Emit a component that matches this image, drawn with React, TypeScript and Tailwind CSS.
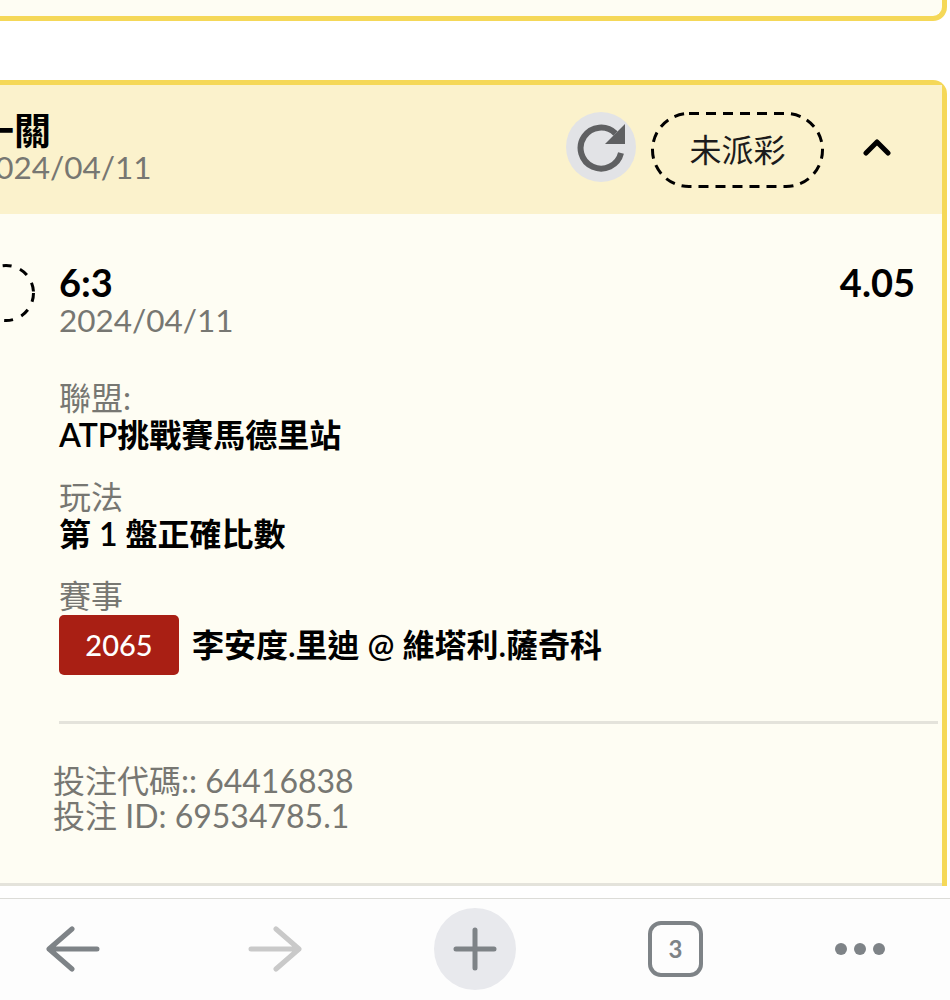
import React from 'react';

const FONT = "font-['Lato','Noto_Sans_CJK_TC',sans-serif]";

const Field: React.FC<{ label: string; value: string; className?: string }> = ({ label, value, className }) => (
  <div className={className}>
    <div className="text-[32px] leading-[37px] text-[#777772]">{label}</div>
    <div className="text-[32px] leading-[37px] font-semibold text-black">{value}</div>
  </div>
);

const RefreshIcon = () => (
  <svg width="50" height="50" viewBox="0 0 50 50" fill="none">
    <path d="M39.5 11.5A20.5 20.5 0 1 0 45 31" stroke="#5f6062" strokeWidth="6" />
    <path d="M49 2v20H29z" fill="#5f6062" />
  </svg>
);

const NavBar = () => (
  <nav className="h-[102px] shrink-0 border-t border-[#dcdcd8] bg-[#fdfdfd] flex items-center pl-[46px] pb-[1px]">
    <svg width="54" height="46" viewBox="0 0 54 46" fill="none" stroke="#7e8387" strokeWidth="5" strokeLinecap="round" strokeLinejoin="round">
      <path d="M51 23H3M26 3 3 23l23 20" />
    </svg>
    <svg width="54" height="46" viewBox="0 0 54 46" fill="none" stroke="#c9c9c9" strokeWidth="5" strokeLinecap="round" strokeLinejoin="round" className="ml-[148px]">
      <path d="M3 23h48M28 3l23 20-23 20" />
    </svg>
    <button className="w-[82px] h-[82px] rounded-full bg-[#e8e9ed] flex items-center justify-center ml-[132px]">
      <svg width="44" height="44" viewBox="0 0 44 44" fill="none" stroke="#7e8387" strokeWidth="5" strokeLinecap="round">
        <path d="M22 3v38M3 22h38" />
      </svg>
    </button>
    <div className={`w-[55px] h-[56px] rounded-[13px] border-[4px] border-[#7e8387] flex items-center justify-center text-[24px] font-bold text-[#7e8387] ml-[132px] ${FONT}`}>3</div>
    <div className="flex gap-[7px] ml-[132px]">
      <span className="w-[12px] h-[12px] rounded-full bg-[#7e8387]" />
      <span className="w-[12px] h-[12px] rounded-full bg-[#7e8387]" />
      <span className="w-[12px] h-[12px] rounded-full bg-[#7e8387]" />
    </div>
  </nav>
);

const App: React.FC = () => {
  return (
    <div className={`h-screen w-[950px] flex flex-col overflow-hidden bg-white ${FONT}`}>
      <div className="flex-1 min-h-0 overflow-hidden">
        {/* previous bet, only its lower edge is in view */}
        <div className="h-[21px] mr-[3px] ml-[-40px] border-[5px] border-t-0 border-[#f5d858] rounded-b-[14px] bg-[#fefdf3]" />

        <section className="mt-[59px] mr-[3px] ml-[-93px] border-[5px] border-b-0 border-[#f5d858] rounded-t-[14px] bg-[#fefdf3]">
          <header className="h-[129px] bg-[#fbf2cc] flex items-center pl-[65px] pr-[51px] pb-[6px]">
            <div className="flex-1">
              <div className="mt-[2px] text-[37px] leading-[42px] font-bold text-black">一關</div>
              <div className="mt-[-3px] text-[31.5px] leading-[36px] text-[#777772]">2024/04/11</div>
            </div>
            <button className="w-[70px] h-[70px] rounded-full bg-[#e2e3e6] flex items-center justify-center">
              <RefreshIcon />
            </button>
            <div className="relative ml-[15px] mt-[6px] w-[173px] h-[76px] flex items-center justify-center text-[32px] text-[#1c1c1c]">
              <svg width="173" height="76" viewBox="0 0 173 76" fill="none" className="absolute inset-0">
                <rect x="1.5" y="1.5" width="170" height="73" rx="36.5" stroke="black" strokeWidth="3" strokeDasharray="10 7" />
              </svg>
              未派彩
            </div>
            <svg width="28" height="18" viewBox="0 0 28 18" fill="none" stroke="black" strokeWidth="5" strokeLinecap="round" strokeLinejoin="round" className="ml-[39px]">
              <path d="M3 15 14 4l11 11" />
            </svg>
          </header>

          <div className="pl-[65px] pt-[48px]">
            <div className="flex pr-[27px]">
              <svg width="58" height="58" viewBox="0 0 58 58" fill="none" className="shrink-0 mt-[2px]">
                <circle cx="29" cy="29" r="27.5" stroke="black" strokeWidth="3" strokeDasharray="9 9" />
              </svg>
              <div className="ml-[24px] flex-1">
                <div className="flex justify-between text-[38px] leading-[40px] font-bold text-black">
                  <span>6:3</span>
                  <span>4.05</span>
                </div>
                <div className="text-[31.5px] leading-[36px] text-[#777772]">2024/04/11</div>
              </div>
            </div>

            <div className="ml-[82px]">
              <Field label="聯盟:" value="ATP挑戰賽馬德里站" className="mt-[41px]" />
              <Field label="玩法" value="第 1 盤正確比數" className="mt-[25px]" />

              <div className="mt-[25px] text-[32px] leading-[37px] text-[#777772]">賽事</div>
              <div className="flex items-center mt-[1px]">
                <span className="w-[120px] h-[60px] rounded-[5px] bg-[#a91f14] text-white text-[29px] font-medium flex items-center justify-center">2065</span>
                <span className="ml-[13px] text-[32px] font-semibold text-black">李安度.里迪 @ 維塔利.薩奇科</span>
              </div>

              <div className="mt-[46px] mr-[4px] h-[3px] bg-[#e4e3db]" />
            </div>

            <div className="ml-[76px] mt-[39px] text-[32px] leading-[35px] text-[#777772]">
              <div>投注代碼:: 64416838</div>
              <div>投注 ID: 69534785.1</div>
            </div>
          </div>

          <div className="mt-[50px] h-[3px] bg-[#e4e3db]" />
        </section>
      </div>
      <NavBar />
    </div>
  );
};

export default App;
